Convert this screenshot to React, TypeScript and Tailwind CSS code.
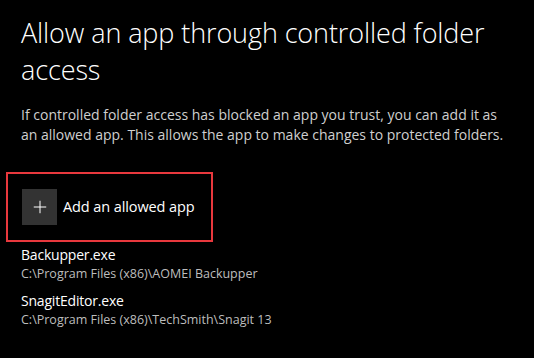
import { Plus } from 'lucide-react';

const apps = [
  { name: 'Backupper.exe', path: 'C:\\Program Files (x86)\\AOMEI Backupper' },
  { name: 'SnagitEditor.exe', path: 'C:\\Program Files (x86)\\TechSmith\\Snagit 13' },
];

export default function App() {
  return (
    <div className="w-[534px] h-[358px] bg-black text-white overflow-hidden font-['Open_Sans',sans-serif]">
      {/* Header */}
      <div className="pl-[21px] pt-[14px]">
        <h1 className="w-[500px] text-[27px] leading-[37px] font-light tracking-[-0.1px]">
          Allow an app through controlled folder access
        </h1>
        <p className="w-[490px] mt-[17px] text-[14px] leading-[20px] text-[#cfcfcf]">
          If controlled folder access has blocked an app you trust, you can add it as an allowed app. This allows the
          app to make changes to protected folders.
        </p>
      </div>

      {/* Add button, highlighted */}
      <div className="ml-[6px] mt-[27px] w-[207px] h-[70px] border-2 border-[#e8383d] flex items-center pl-[14px]">
        <div className="flex items-center gap-[6px]">
          <div className="w-[35px] h-[36px] bg-[#333333] flex items-center justify-center">
            <Plus size={20} strokeWidth={1.2} color="#ffffff" />
          </div>
          <span className="text-[14.5px] tracking-[-0.1px]">Add an allowed app</span>
        </div>
      </div>

      {/* Allowed apps */}
      <div className="pl-[21px] mt-[3px] flex flex-col gap-[8px]">
        {apps.map((a) => (
          <div key={a.name}>
            <div className="text-[14px] leading-[20px] tracking-[-0.2px]">{a.name}</div>
            <div className="text-[12.5px] leading-[18px] text-[#bdbdbd]">{a.path}</div>
          </div>
        ))}
      </div>
    </div>
  );
}
